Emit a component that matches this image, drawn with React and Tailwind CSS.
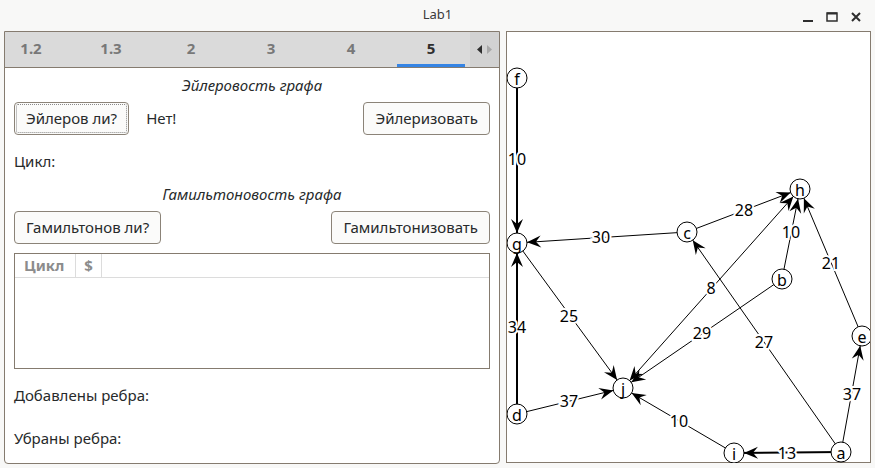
import React from "react";

const N = {
  f: [518, 78],
  g: [518, 243],
  c: [688, 232],
  h: [801, 189],
  b: [783, 279],
  e: [863, 336],
  j: [624, 388],
  d: [518, 414],
  i: [735, 453],
  a: [842, 452],
};

const R = 10;

const EDGES = [
  { s: "f", t: "g", w: "10", thick: true, l: [518, 159] },
  { s: "c", t: "g", w: "30", l: [602, 237] },
  { s: "c", t: "h", w: "28", l: [745, 210] },
  { s: "b", t: "h", w: "10", l: [792, 232] },
  { s: "e", t: "h", w: "21", l: [832, 263] },
  { s: "j", t: "h", w: "8", both: true, l: [712, 288] },
  { s: "a", t: "c", w: "27", l: [765, 342] },
  { s: "g", t: "j", w: "25", l: [570, 316] },
  { s: "d", t: "g", w: "34", thick: true, l: [518, 327] },
  { s: "d", t: "j", w: "37", l: [570, 401] },
  { s: "i", t: "j", w: "10", l: [680, 421] },
  { s: "a", t: "i", w: "13", thick: true, l: [788, 453] },
  { s: "a", t: "e", w: "37", l: [853, 394] },
  { s: "b", t: "j", w: "29", l: [703, 333] },
];

function arrow(from, to) {
  const dx = to[0] - from[0];
  const dy = to[1] - from[1];
  const len = Math.hypot(dx, dy);
  const ux = dx / len;
  const uy = dy / len;
  const tip = [to[0] - ux * R, to[1] - uy * R];
  const L = 14;
  const W = 6;
  const base = [tip[0] - ux * L, tip[1] - uy * L];
  const nx = -uy;
  const ny = ux;
  const left = [base[0] + nx * W, base[1] + ny * W];
  const right = [base[0] - nx * W, base[1] - ny * W];
  const notch = [tip[0] - ux * 9, tip[1] - uy * 9];
  return [tip, left, notch, right].map((p) => p.join(",")).join(" ");
}

function Graph() {
  return (
    <svg width="363" height="431" className="block">
      <g transform="translate(-508,-32)">
        {EDGES.map((e, k) => {
          const a = N[e.s];
          const b = N[e.t];
          return (
            <g key={k}>
              <line
                x1={a[0]}
                y1={a[1]}
                x2={b[0]}
                y2={b[1]}
                stroke="#000"
                strokeWidth={e.thick ? 2 : 1}
              />
              <polygon points={arrow(a, b)} fill="#000" />
              {e.both && <polygon points={arrow(b, a)} fill="#000" />}
            </g>
          );
        })}
        {EDGES.map((e, k) => (
          <text
            key={"l" + k}
            x={e.l[0]}
            y={e.l[1]}
            textAnchor="middle"
            dominantBaseline="central"
            fontSize="16"
            fontFamily="'Noto Sans', sans-serif"
            fill="#000"
            stroke="#fff"
            strokeWidth="4"
            paintOrder="stroke"
          >
            {e.w}
          </text>
        ))}
        {Object.entries(N).map(([k, p]) => (
          <g key={k}>
            <circle cx={p[0]} cy={p[1]} r={R} fill="#fff" stroke="#000" strokeWidth="1" />
            <text
              x={p[0]}
              y={p[1] + 1}
              textAnchor="middle"
              dominantBaseline="central"
              fontSize="16"
              fontFamily="'Noto Sans', sans-serif"
              fill="#000"
            >
              {k}
            </text>
          </g>
        ))}
      </g>
    </svg>
  );
}

function Btn({ children, focus }) {
  return (
    <div className="h-[33px] rounded-[4px] border border-[#8b8378] bg-[#fbfbfa] p-[1px] flex">
      <div
        className={
          "flex-1 flex items-center justify-center px-[9px] rounded-[2px] border " +
          (focus ? "border-dotted border-[#8a8a8a]" : "border-transparent")
        }
      >
        {children}
      </div>
    </div>
  );
}

const tabs = ["1.2", "1.3", "2", "3", "4", "5"];

export default function App() {
  return (
    <div
      className="w-[875px] h-[468px] bg-[#f8f8f7] flex flex-col text-[15px] text-[#272a2b] overflow-hidden"
      style={{ fontFamily: "'Noto Sans', 'Open Sans', sans-serif" }}
    >
      <div className="h-[31px] grid grid-cols-[1fr_auto_1fr] items-center">
        <div />
        <div className="text-[13px] text-[#3a3a3a] pb-[2px]">Lab1</div>
        <div className="flex justify-end items-center gap-[12px] pr-[13px] pt-[2px]">
          <svg width="12" height="12" viewBox="0 0 12 12">
            <line x1="1" y1="10" x2="11" y2="10" stroke="#2e2e2e" strokeWidth="2" />
          </svg>
          <svg width="12" height="12" viewBox="0 0 12 12">
            <rect x="1" y="2" width="10" height="8" fill="none" stroke="#2e2e2e" strokeWidth="1.5" />
            <line x1="1" y1="2.5" x2="11" y2="2.5" stroke="#2e2e2e" strokeWidth="2" />
          </svg>
          <svg width="12" height="12" viewBox="0 0 12 12">
            <path d="M2 2 L10 10 M10 2 L2 10" stroke="#2e2e2e" strokeWidth="2" />
          </svg>
        </div>
      </div>
      <div className="flex px-[4px] gap-[6px] h-[433px]">
        <div className="w-[497px] h-[433px] border border-[#857b6f] rounded-b-[4px] bg-white flex flex-col overflow-hidden">
          <div className="h-[36px] bg-[#dadada] border-b border-[#857b6f] flex shrink-0">
            <div className="flex-1 flex overflow-hidden">
              <div className="flex ml-[-14px]">
                {tabs.map((t, i) => (
                  <div key={t} className="w-[80px] h-[35px] flex flex-col shrink-0">
                    <div
                      className={
                        "flex-1 flex items-center justify-center font-bold text-[15px] " +
                        (i === 5 ? "text-[#2e2e2e]" : "text-[#787878]")
                      }
                    >
                      {t}
                    </div>
                    <div className={"h-[3px] mx-[6px] " + (i === 5 ? "bg-[#3584e4]" : "")} />
                  </div>
                ))}
              </div>
            </div>
            <div className="w-[29px] bg-[#d2d2d2] flex items-center justify-center gap-[5px]">
              <svg width="5" height="9" viewBox="0 0 5 9">
                <path d="M5 0 L0 4.5 L5 9 Z" fill="#2e2e2e" />
              </svg>
              <svg width="5" height="9" viewBox="0 0 5 9">
                <path d="M0 0 L5 4.5 L0 9 Z" fill="#a8a8a8" />
              </svg>
            </div>
          </div>
          <div className="flex flex-col px-[9px]">
            <div className="mt-[7px] h-[20px] flex items-center justify-center italic">
              Эйлеровость графа
            </div>
            <div className="mt-[7px] flex items-center">
              <Btn focus>Эйлеров ли?</Btn>
              <div className="ml-[17px]">Нет!</div>
              <div className="flex-1" />
              <Btn>Эйлеризовать</Btn>
            </div>
            <div className="mt-[16px] h-[20px] flex items-center">Цикл:</div>
            <div className="mt-[13px] h-[20px] flex items-center justify-center italic">
              Гамильтоновость графа
            </div>
            <div className="mt-[7px] flex items-center justify-between">
              <Btn>Гамильтонов ли?</Btn>
              <Btn>Гамильтонизовать</Btn>
            </div>
            <div className="mt-[9px] h-[116px] border border-[#857b6f] bg-white">
              <div className="h-[24px] border-b border-[#dcdcdc] flex text-[#8c8c8c] font-bold text-[15px]">
                <div className="w-[61px] border-r border-[#dcdcdc] flex items-center px-[9px]">Цикл</div>
                <div className="w-[26px] border-r border-[#dcdcdc] flex items-center justify-center">$</div>
              </div>
            </div>
            <div className="mt-[16px] h-[20px] flex items-center">Добавлены ребра:</div>
            <div className="mt-[23px] h-[20px] flex items-center">Убраны ребра:</div>
          </div>
        </div>
        <div className="w-[365px] h-[432px] border border-[#857b6f] bg-white">
          <Graph />
        </div>
      </div>
    </div>
  );
}
